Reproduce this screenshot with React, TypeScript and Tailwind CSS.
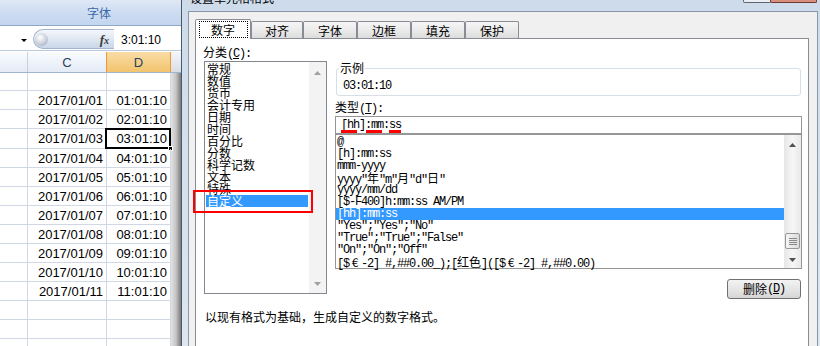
import React from "react";

const cjk = "font-['Noto_Sans_CJK_SC',sans-serif]";
const mono = "font-['Liberation_Mono','Noto_Sans_CJK_SC',monospace] text-[12px] tracking-[-1.2px]";

function Tri({ up, color }: { up?: boolean; color: string }) {
  return (
    <svg width="7" height="4" viewBox="0 0 7 4" className="block">
      {up ? <path d="M0 4L3.5 0L7 4Z" fill={color} /> : <path d="M0 0H7L3.5 4Z" fill={color} />}
    </svg>
  );
}

function Wide({ c }: { c: string }) {
  return (
    <span className="inline-block w-[12px] text-center text-[12px] tracking-normal font-['Noto_Sans_CJK_SC',sans-serif]">{c}</span>
  );
}

function Excel() {
  const dates = Array.from({ length: 11 }, (_, i) => `2017/01/${String(i + 1).padStart(2, "0")}`);
  const times = Array.from({ length: 11 }, (_, i) => `${String(i + 1).padStart(2, "0")}:01:10`);
  const rowH = [
    "h-[18px]", "h-[19px]", "h-[19px]", "h-[20px]", "h-[19px]", "h-[19px]", "h-[19px]", "h-[19px]",
    "h-[19px]", "h-[19px]", "h-[19px]", "h-[19px]", "h-[19px]", "h-[19px]", "h-[19px]",
  ];
  return (
    <div className="w-[181px] shrink-0 flex flex-col font-['Liberation_Sans',sans-serif]">
      <div className="h-[26px] shrink-0 border-b border-[#8fa7c6] bg-gradient-to-b from-[#dfe9f6] via-[#cddcf1] to-[#c3d6ef] flex items-center">
        <span className={`${cjk} text-[12px] leading-[12px] text-[#3d68a6] ml-[87px] mt-[1px]`}>字体</span>
      </div>
      <div className="h-[25px] shrink-0 border-b border-[#b9c9dd] bg-white flex">
        <div className="w-[33px] pl-[21px] pt-[13px]">
          <svg width="6" height="3" viewBox="0 0 6 3" className="block">
            <path d="M0 0H6L3 3Z" fill="#000" />
          </svg>
        </div>
        <div className="mt-[3px] h-[20px] w-[81px] rounded-l-full border border-r-0 border-[#a3b5cc] bg-gradient-to-b from-[#f4f7fb] via-[#dfe7f2] to-[#c9d7ea] flex items-center">
          <div className="ml-px w-[13px] h-[13px] rounded-full bg-[radial-gradient(circle_at_40%_35%,#ffffff,#c9d0d9_55%,#8e99a8)]" />
          <div className="flex-1" />
          <span className="pr-[5px] font-['Liberation_Serif',serif] italic font-bold text-[13px] leading-none text-[#3a3a3a]">
            f<span className="text-[10px]">x</span>
          </span>
        </div>
        <div className="flex-1 bg-white pl-[7px] pt-[8px] text-[12px] leading-[12px] text-black">3:01:10</div>
      </div>
      <div className="h-px shrink-0 bg-white" />
      <div className="h-[21px] shrink-0 flex border-b border-[#9eb6ce]">
        <div className="w-[28px] border-r border-[#c5d1e0] bg-gradient-to-b from-[#f9fbfd] to-[#e4ebf6]" />
        <div className="w-[78px] bg-gradient-to-b from-[#f9fbfd] to-[#e4ebf6] flex items-center justify-center text-[13px] leading-none text-[#27415f] pt-px">
          C
        </div>
        <div className="w-[65px] border-x border-[#f29536] bg-gradient-to-b from-[#f9dca6] to-[#f2c46c] flex items-center justify-center text-[13px] leading-none text-[#27415f] pt-px">
          D
        </div>
        <div className="flex-1 bg-gradient-to-b from-[#f3f5f8] to-[#d9dee6]" />
      </div>
      <div className="flex flex-1 overflow-hidden">
        <div className="w-[171px] flex flex-col bg-white">
          {rowH.map((h, i) => {
            const d = i >= 1 && i <= 11 ? i - 1 : -1;
            return (
              <div key={i} className={`${h} shrink-0 flex text-[13px] leading-none text-black`}>
                <div className="w-[28px] border-r border-b border-[#d0d7e5]" />
                <div className="w-[79px] border-r border-b border-[#d0d7e5] flex items-center justify-end pr-[3px]">
                  {d >= 0 ? dates[d] : ""}
                </div>
                <div className="w-[64px] border-r border-b border-[#d0d7e5] flex items-center justify-end pr-[3px] relative">
                  {d >= 0 ? times[d] : ""}
                  {i === 3 && (
                    <div className="absolute -left-[2px] -top-px -right-px -bottom-px border-2 border-black">
                      <div className="absolute -right-[4px] -bottom-[4px] w-[5px] h-[5px] bg-black border border-white" />
                    </div>
                  )}
                </div>
              </div>
            );
          })}
        </div>
        <div className="w-[10px] bg-gradient-to-r from-[#e2e2e2] via-[#c4c4c4] to-[#7a7a7a]" />
      </div>
    </div>
  );
}

function CatList() {
  const items = ["常规", "数值", "货币", "会计专用", "日期", "时间", "百分比", "分数", "科学记数", "文本", "特殊", "自定义"];
  return (
    <div className="mt-[3px] h-[233px] border border-[#828790] bg-white flex">
      <div className={`flex-1 pt-px ${cjk} text-[12px] leading-[12px] text-black`}>
        {items.map((t, i) => (
          <div key={t} className={`h-[12px] mx-px pl-px whitespace-nowrap ${i === 11 ? "bg-[#3399ff] text-white" : ""}`}>
            {t}
          </div>
        ))}
      </div>
      <div className="w-[17px] bg-[#f3f3f3] flex flex-col items-center pt-[9px] pb-[7px]">
        <Tri up color="#a0a0a0" />
        <div className="flex-1" />
        <Tri color="#a0a0a0" />
      </div>
    </div>
  );
}

function TypeList() {
  const items: React.ReactNode[] = [
    "@",
    "[h]:mm:ss",
    "mmm-yyyy",
    <>yyyy"<Wide c="年" />"m"<Wide c="月" />"d"<Wide c="日" />"</>,
    "yyyy/mm/dd",
    "[$-F400]h:mm:ss AM/PM",
    "[hh]:mm:ss",
    '"Yes";"Yes";"No"',
    '"True";"True";"False"',
    '"On";"On";"Off"',
    <>[$<Wide c="€" />-2] #,##0.00_);[<Wide c="红" /><Wide c="色" />]([$<Wide c="€" />-2] #,##0.00)</>,
  ];
  return (
    <div className="h-[135px] border border-[#969696] bg-white flex">
      <div className={`flex-1 pt-px ${mono} text-black`}>
        {items.map((t, i) => (
          <div key={i} className={`h-[12px] leading-[12px] pl-px whitespace-nowrap ${i === 6 ? "bg-[#3399ff] text-white" : ""}`}>
            {t}
          </div>
        ))}
      </div>
      <div className="w-[17px] bg-gradient-to-r from-[#e6e6e6] via-[#f6f6f6] to-[#e9e9e9] flex flex-col items-center pt-[8px] pb-[6px]">
        <Tri up color="#505050" />
        <div className="mt-[86px] w-[15px] h-[16px] rounded-[2px] border border-[#979797] bg-gradient-to-r from-[#f6f6f6] to-[#dadada] flex items-center justify-center">
          <svg width="8" height="7" viewBox="0 0 8 7" className="block">
            <path d="M0 0.5H8M0 2.5H8M0 4.5H8M0 6.5H8" stroke="#8a8a8a" strokeWidth="1" />
          </svg>
        </div>
        <div className="flex-1" />
        <Tri color="#505050" />
      </div>
    </div>
  );
}

function Dialog() {
  const tabs: [string, string][] = [
    ["对齐", "w-[52px]"],
    ["字体", "w-[54px]"],
    ["边框", "w-[54px]"],
    ["填充", "w-[54px]"],
    ["保护", "w-[54px]"],
  ];
  return (
    <div className="flex-1 relative bg-gradient-to-b from-[#cddbeb] to-[#dde6f1] border-l border-[#4d5966] flex flex-col">
      <div className="h-[11px] shrink-0 relative overflow-hidden">
        <div className={`${cjk} text-[12px] leading-[12px] text-black absolute left-[8px] -top-[8px] whitespace-nowrap`}>设置单元格格式</div>
        <div className="absolute top-0 left-[561px] w-[28px] h-[3px] border-x border-b border-[#5c6670] rounded-b-[2px] bg-[#e9eef4]" />
        <div className="absolute top-0 left-[588px] w-[47px] h-[3px] border-x border-b border-[#6b3a30] rounded-b-[2px] bg-[#d88f7e]" />
      </div>
      <div className="ml-[6px] mr-[2px] flex-1 border-t border-x border-[#8b97a4] bg-[#f0f0f0] flex flex-col pl-[6px] pr-[8px] pt-[7px]">
        <div className={`h-[19px] shrink-0 flex items-start ${cjk} text-[12px] leading-[12px] text-black`}>
          <div className="relative z-10 w-[56px] h-[20px] bg-white border border-b-0 border-[#898c95] rounded-t-[2px] flex items-center justify-center pt-px">
            数字
            <div className="absolute left-[3px] right-[2px] top-px bottom-px border border-dotted border-black" />
          </div>
          {tabs.map(([t, w]) => (
            <div key={t} className={`${w} mt-[2px] h-[17px] border border-b-0 border-[#898c95] rounded-t-[2px] bg-gradient-to-b from-[#f5f5f5] via-[#ebebeb] to-[#dcdcdc] flex items-center justify-center pt-[2px]`}>
              {t}
            </div>
          ))}
        </div>
        <div className={`flex-1 bg-white border border-b-0 border-[#898c95] flex flex-col ${cjk} text-[12px] leading-[12px] text-black`}>
          <div className="flex">
            <div className="ml-[8px] w-[123px] flex flex-col relative">
              <div className="mt-[7px] h-[12px] -ml-px whitespace-nowrap">
                分类<span className={mono}>(<span className="underline">C</span>):</span>
              </div>
              <CatList />
              <div className="absolute -left-[11px] top-[151px] w-[120px] h-[23px] border-2 border-[#ff0000]" />
            </div>
            <div className="ml-[8px] w-[467px] flex flex-col">
              <div className="mt-[29px] ml-px w-[465px] h-[28px] border border-[#d5dfe5] rounded-[3px] relative">
                <div className="absolute left-[2px] -top-[7px] bg-white px-px">示例</div>
                <div className={`pl-[6px] pt-[11px] ${mono} leading-[12px]`}>03:01:10</div>
              </div>
              <div className="mt-[5px] h-[12px] whitespace-nowrap">
                类型<span className={mono}>(<span className="underline">T</span>):</span>
              </div>
              <div className="mt-[3px] h-[18px] border border-[#969696] bg-white relative flex items-center pl-[5px]">
                <span className={`${mono} leading-[12px]`}>[hh]:mm:ss</span>
                <div className="absolute left-[5px] top-[13px] w-[16px] h-[3px] bg-[#ff0000]" />
                <div className="absolute left-[30px] top-[13px] w-[16px] h-[3px] bg-[#ff0000]" />
                <div className="absolute left-[53px] top-[13px] w-[12px] h-[3px] bg-[#ff0000]" />
              </div>
              <TypeList />
              <div className="mt-[10px] mr-px self-end w-[74px] h-[20px] border border-[#707070] rounded-[3px] bg-gradient-to-b from-[#f3f3f3] via-[#e6e6e6] to-[#d6d6d6] flex items-center justify-center whitespace-nowrap">
                删除<span className={mono}>(<span className="underline">D</span>)</span>
              </div>
            </div>
          </div>
          <div className="mt-[12px] pl-[9px] whitespace-nowrap">以现有格式为基础，生成自定义的数字格式。</div>
        </div>
      </div>
    </div>
  );
}

export default function App() {
  return (
    <div className="w-[820px] h-[346px] overflow-hidden flex bg-white">
      <Excel />
      <Dialog />
    </div>
  );
}
